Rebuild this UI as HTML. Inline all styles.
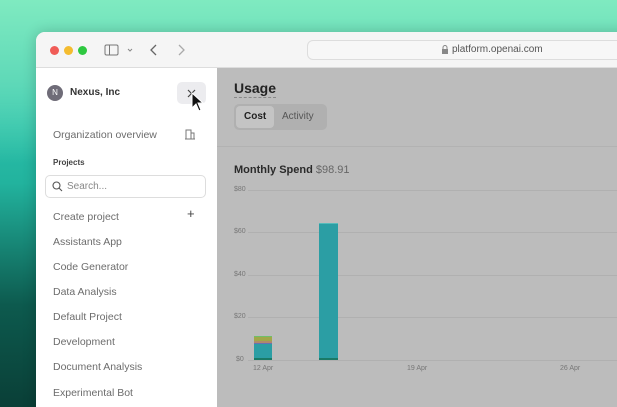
<!DOCTYPE html><html><head><style>
*{margin:0;padding:0;box-sizing:border-box}
html,body{width:617px;height:407px;overflow:hidden}
body{position:relative;font-family:"Liberation Sans",sans-serif;
background:linear-gradient(180deg,#7feac0 0%,#5fd9b8 20%,rgba(0,0,0,0) 40%),linear-gradient(180deg,#3ad6bf 0%,#22b39e 45%,#0d5a4e 75%,#0a3f37 100%);}
.win{position:absolute;left:36px;top:32px;width:600px;height:390px;background:#f4f4f4;border-radius:9px 0 0 0;overflow:hidden;box-shadow:0 0 14px rgba(0,0,0,.2)}
.tb{position:absolute;left:0;top:0;right:0;height:36px;background:#f5f5f5;border-bottom:1px solid #ddd}
.dot{position:absolute;top:14px;width:9px;height:9px;border-radius:50%}
.side{position:absolute;left:0;top:36px;width:181px;bottom:0;background:#fff}
.main{position:absolute;left:181px;top:36px;right:0;bottom:0;background:#bcbcbc}
.t{position:absolute;white-space:nowrap}
.item{position:absolute;left:17px;font-size:10.5px;color:#6c6c6c}
.lbl{position:absolute;font-size:7px;color:#777}
.grid{position:absolute;left:31px;right:0;height:1px;background:#b0b0b0}
.b{position:absolute}
</style></head><body>
<div class="win">
<div class="tb">
<div class="dot" style="left:14px;background:#f05c57"></div>
<div class="dot" style="left:28px;background:#f4bc2f"></div>
<div class="dot" style="left:42px;background:#2ec840"></div>
<svg style="position:absolute;left:68px;top:12px" width="30" height="12"><rect x="1" y="1" width="13" height="10" rx="1.5" fill="none" stroke="#777" stroke-width="1"/><line x1="5.5" y1="1" x2="5.5" y2="11" stroke="#777"/><path d="M24 5l2 2 2-2" fill="none" stroke="#888"/></svg>
<svg style="position:absolute;left:112px;top:11px" width="40" height="14"><path d="M8 2L3 7l5 5" fill="none" stroke="#666" stroke-width="1.3"/><path d="M31 2l5 5-5 5" fill="none" stroke="#aaa" stroke-width="1.3"/></svg>
<div style="position:absolute;left:271px;top:8px;width:340px;height:20px;border:1px solid #ddd;border-radius:6px;background:#f7f7f7"></div>
<svg style="position:absolute;left:405px;top:13px" width="8" height="10"><rect x="1" y="4" width="6" height="5" fill="#888"/><path d="M2 4V2.5a2 2 0 0 1 4 0V4" fill="none" stroke="#888"/></svg>
<div class="t" style="left:416px;top:12px;font-size:10px;color:#555">platform.openai.com</div>
</div>
<div class="side">
<div style="position:absolute;left:11px;top:17px;width:16px;height:16px;border-radius:50%;background:#6f6c78;color:#fff;font-size:8px;text-align:center;line-height:16px">N</div>
<div class="t" style="left:34px;top:19px;font-size:10px;color:#333;font-weight:bold">Nexus, Inc</div>
<div style="position:absolute;left:141px;top:14px;width:29px;height:22px;border-radius:5px;background:#ececef"></div>
<svg style="position:absolute;left:150px;top:20px" width="12" height="12"><path d="M2 2l7 7M9 2L2 9" stroke="#444" stroke-width="1.2"/></svg>
<svg style="position:absolute;left:155px;top:24px" width="16" height="22"><path d="M1 1v15l4-4 3 7 2-1-3-7h5z" fill="#111" stroke="#fff" stroke-width="1"/></svg>
<div class="item" style="top:61px">Organization overview</div>
<svg style="position:absolute;left:148px;top:61px" width="12" height="11"><path d="M1 10h10M2 10V1h5v9M7 4h3v6" fill="none" stroke="#777"/></svg>
<div class="t" style="left:17px;top:90px;font-size:8px;color:#444;font-weight:bold">Projects</div>
<div style="position:absolute;left:9px;top:107px;width:161px;height:23px;border:1px solid #ddd;border-radius:5px"></div>
<svg style="position:absolute;left:16px;top:113px" width="11" height="11"><circle cx="4.5" cy="4.5" r="3.5" fill="none" stroke="#555" stroke-width="1.1"/><path d="M7 7l3 3" stroke="#555" stroke-width="1.1"/></svg>
<div class="item" style="left:31px;top:113px;color:#888;font-size:10px">Search...</div>
<div class="item" style="top:143px">Create project</div>
<div class="t" style="left:151px;top:138px;font-size:13px;color:#444">+</div>
<div class="item" style="top:168px">Assistants App</div>
<div class="item" style="top:193px">Code Generator</div>
<div class="item" style="top:218px">Data Analysis</div>
<div class="item" style="top:243px">Default Project</div>
<div class="item" style="top:268px">Development</div>
<div class="item" style="top:293px">Document Analysis</div>
<div class="item" style="top:319px">Experimental Bot</div>
</div>
<div class="main">
<div class="t" style="left:17px;top:12px;font-size:14px;font-weight:bold;color:#222;border-bottom:1px dashed #888;padding-bottom:1px">Usage</div>
<div style="position:absolute;left:17px;top:36px;width:93px;height:26px;border-radius:5px;background:#b0b0b0"></div>
<div style="position:absolute;left:19px;top:38px;width:38px;height:22px;border-radius:4px;background:#c4c4c4"></div>
<div class="t" style="left:27px;top:43px;font-size:10px;color:#222;font-weight:bold">Cost</div>
<div class="t" style="left:65px;top:43px;font-size:10px;color:#555">Activity</div>
<div style="position:absolute;left:0;right:0;top:78px;height:1px;background:#b2b2b2"></div>
<div class="t" style="left:17px;top:96px;font-size:11px;color:#2a2a2a;font-weight:bold">Monthly Spend <span style="font-weight:normal;color:#666">$98.91</span></div>
<div class="lbl" style="left:17px;top:118px">$80</div><div class="grid" style="top:122px"></div>
<div class="lbl" style="left:17px;top:160px">$60</div><div class="grid" style="top:164px"></div>
<div class="lbl" style="left:17px;top:203px">$40</div><div class="grid" style="top:207px"></div>
<div class="lbl" style="left:17px;top:245px">$20</div><div class="grid" style="top:249px"></div>
<div class="lbl" style="left:19px;top:288px">$0</div><div class="grid" style="top:292px"></div>
<div class="b" style="left:37px;top:268px;width:18px;height:1px;background:#6fbf6a"></div>
<div class="b" style="left:37px;top:269px;width:18px;height:4px;background:#a0a848"></div>
<div class="b" style="left:37px;top:273px;width:18px;height:2px;background:#b08a6a"></div>
<div class="b" style="left:37px;top:275px;width:18px;height:1px;background:#6a70b0"></div>
<div class="b" style="left:37px;top:276px;width:18px;height:16px;background:#2b9ea4"></div>
<div class="b" style="left:37px;top:290px;width:18px;height:2px;background:#1a7a66"></div>
<div class="b" style="left:102px;top:155px;width:19px;height:137px;background:#2b9ea4;border-top:1px solid #5bb"></div>
<div class="b" style="left:102px;top:290px;width:19px;height:2px;background:#1a7a66"></div>
<div class="lbl" style="left:36px;top:297px">12 Apr</div>
<div class="lbl" style="left:190px;top:297px">19 Apr</div>
<div class="lbl" style="left:343px;top:297px">26 Apr</div>
</div>
</div>
</body></html>
